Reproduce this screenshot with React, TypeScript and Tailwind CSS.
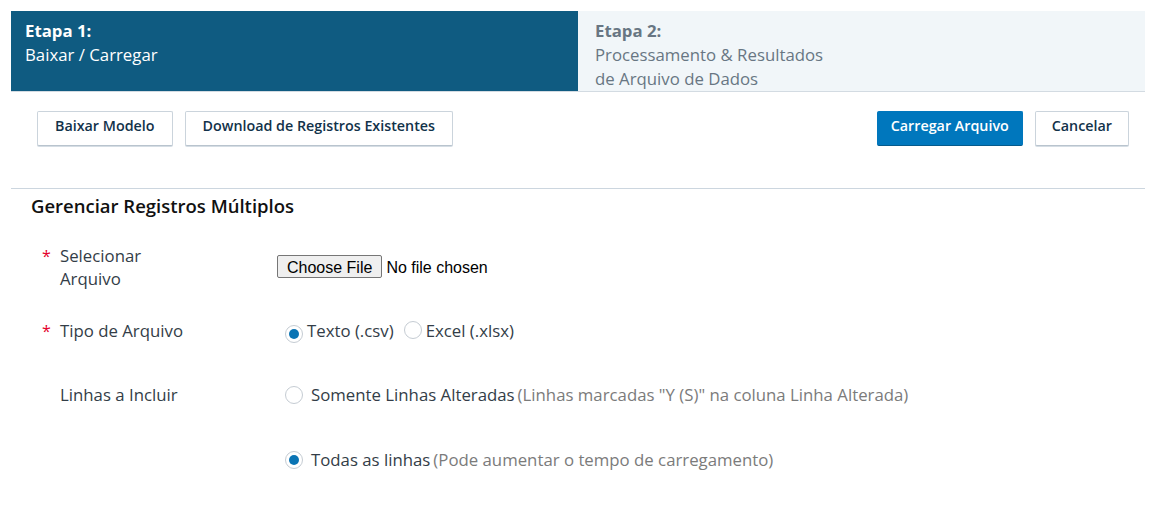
import React from "react";

function Radio({ checked }: { checked?: boolean }) {
  return (
    <span className="inline-flex h-[18px] w-[18px] shrink-0 items-center justify-center rounded-full border border-[#c5ccd3] bg-white">
      {checked && <span className="h-[10px] w-[10px] rounded-full bg-[#0a74b4]" />}
    </span>
  );
}

function Req() {
  return <span className="w-[18px] shrink-0 text-[16px] text-[#e4002b]">*</span>;
}

const btn =
  "h-[35px] rounded-[2px] border border-[#cbd4dc] border-b-[#b9c4ce] bg-white pb-[5px] text-[14.3px] font-semibold text-[#12324a] shadow-[0_1px_0_#d5dde4]";

export default function App() {
  return (
    <div className="min-h-[512px] bg-white pl-[11px] pr-[6px] pt-[11px] font-['Open_Sans',sans-serif] text-[16.8px] text-[#333d47]">
      {/* Steps header */}
      <div className="grid h-[81px] grid-cols-2 border-b border-[#d3dbe2]">
        <div className="bg-[#0f5b81] px-[14px] pt-[8px] leading-[24px] text-white">
          <div className="font-bold">Etapa 1:</div>
          <div>Baixar / Carregar</div>
        </div>
        <div className="bg-[#f1f6f9] px-[17px] pt-[8px] leading-[24px] text-[#687683]">
          <div className="font-bold">Etapa 2:</div>
          <div>Processamento &amp; Resultados</div>
          <div>de Arquivo de Dados</div>
        </div>
      </div>

      {/* Actions */}
      <div className="mt-[19px] flex items-start pl-[26px] pr-[16px]">
        <div className="flex gap-[12px]">
          <button className={btn + " px-[17px]"}>Baixar Modelo</button>
          <button className={btn + " px-[17px]"}>Download de Registros Existentes</button>
        </div>
        <div className="ml-auto flex gap-[12px]">
          <button className="h-[35px] rounded-[2px] border border-[#0077bd] border-b-[#055a8c] bg-[#0077bd] px-[13px] pb-[5px] text-[14.3px] font-semibold text-white">
            Carregar Arquivo
          </button>
          <button className={btn + " px-[16px]"}>Cancelar</button>
        </div>
      </div>

      <div className="mt-[42px] border-t border-[#ccd6df]" />

      {/* Form */}
      <div className="px-[20px] pt-[5px]">
        <h2 className="text-[18.5px] font-semibold leading-[24px] text-[#111]">Gerenciar Registros Múltiplos</h2>

        <div className="mt-[24px] flex items-center pl-[11px]">
          <div className="flex w-[235px] items-start pt-[2px]">
            <Req />
            <span className="w-[120px] leading-[23px]">Selecionar Arquivo</span>
          </div>
          <input
            type="file"
            className="mt-[2px] font-['Liberation_Sans',Arial,sans-serif] text-[16px] text-black file:mr-[4px] file:h-[23px] file:rounded-[2px] file:border file:border-[#767676] file:bg-[#efefef] file:px-[9px] file:text-black"
          />
        </div>

        <div className="mt-[26px] flex items-center pl-[11px]">
          <div className="flex w-[243px] items-center">
            <Req />
            <span>Tipo de Arquivo</span>
          </div>
          <label className="flex items-center gap-[4px]">
            <span className="mt-[4px]"><Radio checked /></span>
            <span className="pb-[1px]">Texto (.csv)</span>
          </label>
          <label className="ml-[10px] flex items-center gap-[4px]">
            <span className="mt-[4px]"><Radio /></span>
            <span className="pb-[1px]">Excel (.xlsx)</span>
          </label>
        </div>

        <div className="mt-[37px] flex items-center pl-[11px]">
          <div className="flex w-[243px] items-center">
            <span className="w-[18px]" />
            <span>Linhas a Incluir</span>
          </div>
          <label className="flex items-center gap-[8px]">
            <Radio />
            <span>
              Somente Linhas Alteradas
              <span className="ml-[3px] text-[#7b7b7b]">(Linhas marcadas "Y (S)" na coluna Linha Alterada)</span>
            </span>
          </label>
        </div>

        <div className="mt-[40px] flex items-center pl-[254px]">
          <label className="flex items-center gap-[8px]">
            <Radio checked />
            <span>
              Todas as linhas
              <span className="ml-[3px] text-[#7b7b7b]">(Pode aumentar o tempo de carregamento)</span>
            </span>
          </label>
        </div>
      </div>
    </div>
  );
}
